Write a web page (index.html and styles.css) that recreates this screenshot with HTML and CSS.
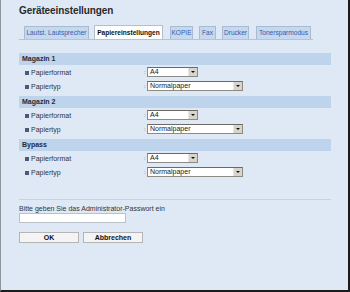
FILE: index.html
```html
<!doctype html>
<html lang="de">
<head>
    <meta charset="UTF-8">
    <title>Geräteeinstellungen</title>
    <link rel="stylesheet" href="styles.css">
</head>
<body>
    <div class="frame">
        <h1>Geräteeinstellungen</h1>
        <div class="tabs">
            <span class="tab t1">Lautst. Lautsprecher</span>
            <span class="tab t2 active">Papiereinstellungen</span>
            <span class="tab t3">KOPIE</span>
            <span class="tab t4">Fax</span>
            <span class="tab t5">Drucker</span>
            <span class="tab t6">Tonersparmodus</span>
        </div>

        <div class="section">
            <div class="section-head">Magazin 1</div>
            <div class="row">
                <span class="label">Papierformat</span>
                <span class="mark">:</span>
                <span class="select small"><span class="value">A4</span><span class="arrow"></span></span>
            </div>
            <div class="row">
                <span class="label">Papiertyp</span>
                <span class="mark">:</span>
                <span class="select wide"><span class="value">Normalpaper</span><span class="arrow"></span></span>
            </div>
        </div>

        <div class="section">
            <div class="section-head">Magazin 2</div>
            <div class="row">
                <span class="label">Papierformat</span>
                <span class="mark">:</span>
                <span class="select small"><span class="value">A4</span><span class="arrow"></span></span>
            </div>
            <div class="row">
                <span class="label">Papiertyp</span>
                <span class="mark">:</span>
                <span class="select wide"><span class="value">Normalpaper</span><span class="arrow"></span></span>
            </div>
        </div>

        <div class="section">
            <div class="section-head">Bypass</div>
            <div class="row">
                <span class="label">Papierformat</span>
                <span class="mark">:</span>
                <span class="select small"><span class="value">A4</span><span class="arrow"></span></span>
            </div>
            <div class="row">
                <span class="label">Papiertyp</span>
                <span class="mark">:</span>
                <span class="select wide"><span class="value">Normalpaper</span><span class="arrow"></span></span>
            </div>
        </div>

        <div class="login">
            <div class="login-text">Bitte geben Sie das Administrator-Passwort ein</div>
            <div class="password"></div>
            <div class="buttons">
                <span class="btn">OK</span>
                <span class="btn">Abbrechen</span>
            </div>
        </div>
    </div>
</body>
</html>
```

FILE: styles.css
```css
body {
    margin: 0;
    font-family: "Liberation Sans", Arial, sans-serif;
    background-color: #dfe9f5;
}

.frame {
    height: 290px;
    border-left: 1px solid #8d949c;
    border-right: 2px solid #1c1c1c;
    border-bottom: 2px solid #1c1c1c;
    padding: 0 17px 0 18px;
    background-color: #dfe9f5;
}

h1 {
    margin: 0;
    padding-top: 5px;
    height: 21px;
    font-size: 10px;
    font-weight: bold;
    letter-spacing: -0.1px;
    color: #2a2a2a;
}

.tabs {
    display: flex;
    align-items: flex-end;
    width: 294px;
    height: 13px;
    border-bottom: 1px solid #b9c3cd;
    margin-bottom: 13px;
}

.tab {
    box-sizing: border-box;
    height: 13px;
    margin-left: 5px;
    border: 1px solid #a7bbd1;
    border-bottom: none;
    background-color: #c4d8f0;
    color: #3a58a8;
    font-size: 6.6px;
    line-height: 12px;
    text-align: center;
    white-space: nowrap;
    overflow: hidden;
}

.tab.active {
    height: 14px;
    background-color: #fff;
    border-color: #b7bec6;
    color: #111;
    font-weight: bold;
    line-height: 13px;
}

.t1 { width: 65px; }
.t2 { width: 69px; }
.t3 { width: 23px; margin-left: 7px; }
.t4 { width: 17px; margin-left: 6px; }
.t5 { width: 27px; margin-left: 6px; }
.t6 { width: 55px; margin-left: 7px; }

.section {
    margin-bottom: 3px;
}

.section-head {
    height: 12px;
    padding-left: 3px;
    background-color: #bdd4ec;
    color: #1f2b3a;
    font-size: 7px;
    font-weight: bold;
    line-height: 12px;
}

.row {
    display: flex;
    align-items: center;
    height: 14px;
    font-size: 7px;
    color: #333;
}

.label {
    width: 113px;
    padding-left: 12px;
    position: relative;
}

.label::before {
    content: "";
    position: absolute;
    left: 6px;
    top: 2px;
    width: 4px;
    height: 4px;
    background-color: #4a5a7a;
}

.mark {
    width: 3px;
    font-size: 6px;
    color: #444;
}

.select {
    box-sizing: border-box;
    display: flex;
    height: 10px;
    border: 1px solid #8e8a84;
    border-top-color: #6d6a66;
    background-color: #fff;
}

.select.small { width: 51px; }
.select.wide { width: 96px; }

.value {
    flex: 1;
    padding-left: 2px;
    font-size: 7px;
    line-height: 8px;
    color: #222;
}

.arrow {
    width: 8px;
    background-color: #d8d4cc;
    border-left: 1px solid #e8e6e2;
    position: relative;
}

.arrow::after {
    content: "";
    position: absolute;
    left: 2px;
    top: 3px;
    border-left: 2px solid transparent;
    border-right: 2px solid transparent;
    border-top: 2px solid #111;
}

.login {
    margin-top: 20px;
    border-top: 1px solid #c6d3e0;
    padding-top: 4px;
}

.login-text {
    font-size: 7px;
    color: #333;
    height: 9px;
    line-height: 9px;
}

.password {
    box-sizing: border-box;
    width: 107px;
    height: 10px;
    background-color: #fff;
    border: 1px solid #b8c0c8;
}

.buttons {
    display: flex;
    gap: 4px;
    margin-top: 9px;
}

.btn {
    box-sizing: border-box;
    width: 60px;
    height: 11px;
    background-color: #f4f4f4;
    border: 1px solid #b5b5b5;
    font-size: 7px;
    font-weight: bold;
    line-height: 9px;
    text-align: center;
    color: #111;
}
```
